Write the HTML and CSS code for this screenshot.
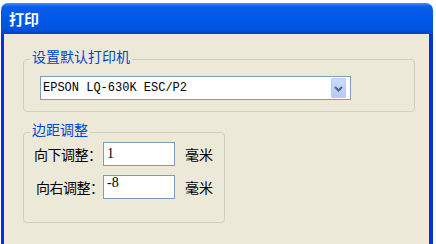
FILE: index.html
```html
<!DOCTYPE html>
<html lang="zh">
<head>
    <meta charset="UTF-8">
    <title>打印</title>
    <link rel="stylesheet" href="styles.css">
</head>
<body>

<div class="window">
    <div class="titlebar">打印</div>

    <div class="content">
        <fieldset class="group group-printer">
            <legend>设置默认打印机</legend>
            <div class="combo">
                <span class="combo-text">EPSON LQ-630K ESC/P2</span>
                <span class="combo-btn">
                    <svg width="15" height="20" viewBox="0 0 15 20">
                        <polyline points="4,9 7.5,12.5 11,9" fill="none" stroke="#4d6185" stroke-width="2"/>
                    </svg>
                </span>
            </div>
        </fieldset>

        <fieldset class="group group-margin">
            <legend>边距调整</legend>
            <div class="row">
                <label class="row-label">向下调整：</label>
                <input class="num" type="text" value="1">
                <span class="unit">毫米</span>
            </div>
            <div class="row">
                <label class="row-label row-label-shift">向右调整：</label>
                <input class="num num-up" type="text" value="-8">
                <span class="unit">毫米</span>
            </div>
        </fieldset>
    </div>
</div>

</body>
</html>
```

FILE: styles.css
```css
    body {
        margin: 0;
        background: #ffffff;
        font-family: "Noto Sans CJK SC", sans-serif;
    }

    .window {
        margin: 3px 0 0 1px;
        width: 432px;
        height: 241px;
        display: flex;
        flex-direction: column;
    }

    .titlebar {
        height: 31px;
        line-height: 32px;
        padding-left: 8px;
        color: #ffffff;
        font-size: 15px;
        font-weight: bold;
        border-radius: 7px 7px 0 0;
        background: linear-gradient(#3d8dff 0%, #0a5ee9 12%, #0058e6 50%, #0253df 85%, #0042c4 100%);
    }

    .content {
        flex: 1;
        background: #ece9d8;
        border-left: 3px solid #0831d9;
        border-right: 4px solid #0831d9;
    }

    .group {
        border: 1px solid #d0d0bf;
        border-radius: 4px;
        padding: 0;
        min-width: 0;
    }

    .group legend {
        color: #0046d5;
        font-size: 14px;
        line-height: 14px;
        padding: 0 2px 6px;
        margin-left: 6px;
    }

    .group-printer {
        margin: 15px 14px 0 19px;
    }

    .group-margin {
        box-sizing: border-box;
        width: 202px;
        margin: 10px 0 0 19px;
        padding: 0 10px 23px 10px;
    }

    .group-margin legend {
        margin-left: -4px;
    }

    /* combo box */
    .combo {
        box-sizing: border-box;
        width: 311px;
        height: 24px;
        margin: 7px 0 11px 16px;
        padding: 1px 4px 1px 2px;
        display: flex;
        align-items: center;
        border: 1px solid #7f9db9;
        background: #ffffff;
    }

    .combo-text {
        font-family: "Liberation Mono", monospace;
        font-size: 12px;
        color: #000000;
    }

    .combo-btn {
        margin-left: auto;
        width: 15px;
        height: 20px;
        border-radius: 2px;
        background: linear-gradient(#cddcfd, #b3c8f6);
        box-shadow: inset 0 0 0 1px #bccdf5;
    }

    .combo-btn svg {
        display: block;
    }

    /* rows */
    .row {
        display: flex;
        align-items: center;
        height: 24px;
        margin-bottom: 9px;
    }

    .row:last-child {
        margin-bottom: 0;
    }

    .row-label {
        width: 69px;
        font-size: 14px;
        letter-spacing: -0.5px;
        white-space: nowrap;
        color: #000000;
    }

    .row-label-shift {
        padding-left: 2px;
        width: 67px;
    }

    .num {
        box-sizing: border-box;
        width: 72px;
        height: 24px;
        margin: 0;
        padding: 0 3px;
        border: 1px solid #7f9db9;
        font-family: "Liberation Serif", serif;
        font-size: 14px;
        color: #000000;
    }

    .num-up {
        padding-bottom: 8px;
    }

    .unit {
        margin-left: 10px;
        font-size: 14px;
        color: #000000;
    }
```
